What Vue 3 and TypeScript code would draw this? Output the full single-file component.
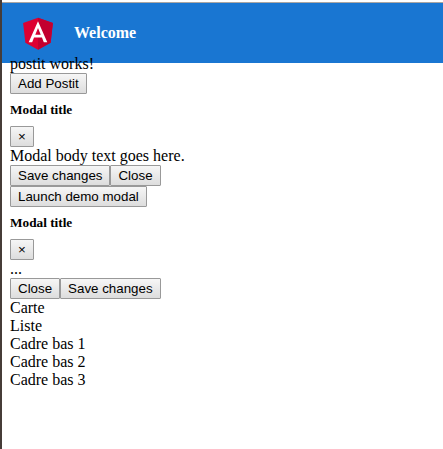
<script setup lang="ts">
interface Modal {
  title: string
  body: string
  actions: string[]
  launcher?: string
}

const modals: Modal[] = [
  {
    title: 'Modal title',
    body: 'Modal body text goes here.',
    actions: ['Save changes', 'Close'],
    launcher: 'Launch demo modal',
  },
  { title: 'Modal title', body: '...', actions: ['Close', 'Save changes'] },
]

const sections: string[] = ['Carte', 'Liste', 'Cadre bas 1', 'Cadre bas 2', 'Cadre bas 3']
</script>

<template>
  <div class="page">
    <header class="toolbar">
      <svg class="logo" width="40" height="40" viewBox="0 0 250 250" aria-hidden="true">
        <path fill="#dd0031" d="M125 30 31.9 63.2l14.2 123.1L125 230l78.9-43.7 14.2-123.1z" />
        <path fill="#c3002f" d="M125 30v200l78.9-43.7 14.2-123.1z" />
        <path
          fill="#fff"
          d="M125 52.1 66.8 182.6h21.7l11.7-29.2h49.4l11.7 29.2H183zm17 83.3h-34l17-40.9z"
        />
      </svg>
      <span>Welcome</span>
    </header>
    <main class="content">
      <p class="line">postit works!</p>
      <div class="row"><button type="button">Add Postit</button></div>
      <template v-for="(modal, i) in modals" :key="i">
        <h5>{{ modal.title }}</h5>
        <div class="row"><button type="button">×</button></div>
        <p class="line">{{ modal.body }}</p>
        <div class="row">
          <button v-for="action in modal.actions" :key="action" type="button">{{ action }}</button>
        </div>
        <div v-if="modal.launcher" class="row">
          <button type="button">{{ modal.launcher }}</button>
        </div>
      </template>
      <p v-for="section in sections" :key="section" class="line">{{ section }}</p>
    </main>
  </div>
</template>

<style>
body {
  margin: 0;
  background: #fff;
}
</style>

<style scoped>
.page {
  box-sizing: border-box;
  height: 449px;
  padding-top: 2px;
  border-left: 2px solid #463c38;
  overflow: hidden;
  color: #000;
  font: 16px/18px 'Liberation Serif', 'Times New Roman', serif;
}

.toolbar {
  box-sizing: border-box;
  display: flex;
  align-items: center;
  height: 61px;
  border-top: 1px solid #aaa6a3;
  background: #1976d2;
  color: #fff;
  font-weight: 600;
}

.logo {
  margin: 0 16px;
}

/* The first line of content slides up over the toolbar. */
.content {
  position: relative;
  margin: -8px 8px 0;
}

.line {
  margin: 0;
  height: 18px;
}

.row {
  display: flex;
  height: 21px;
}

h5 {
  margin: 0;
  padding: 8px 0 9px;
  font-size: 13.28px;
  line-height: 15px;
}

button {
  box-sizing: border-box;
  height: 21px;
  margin: 0;
  padding: 0 7px;
  border: 1px solid #999;
  border-radius: 1px;
  background: linear-gradient(#f6f6f6, #dddddd);
  color: #000;
  font: 13.333px/18px 'Liberation Sans', Arial, sans-serif;
}
</style>
